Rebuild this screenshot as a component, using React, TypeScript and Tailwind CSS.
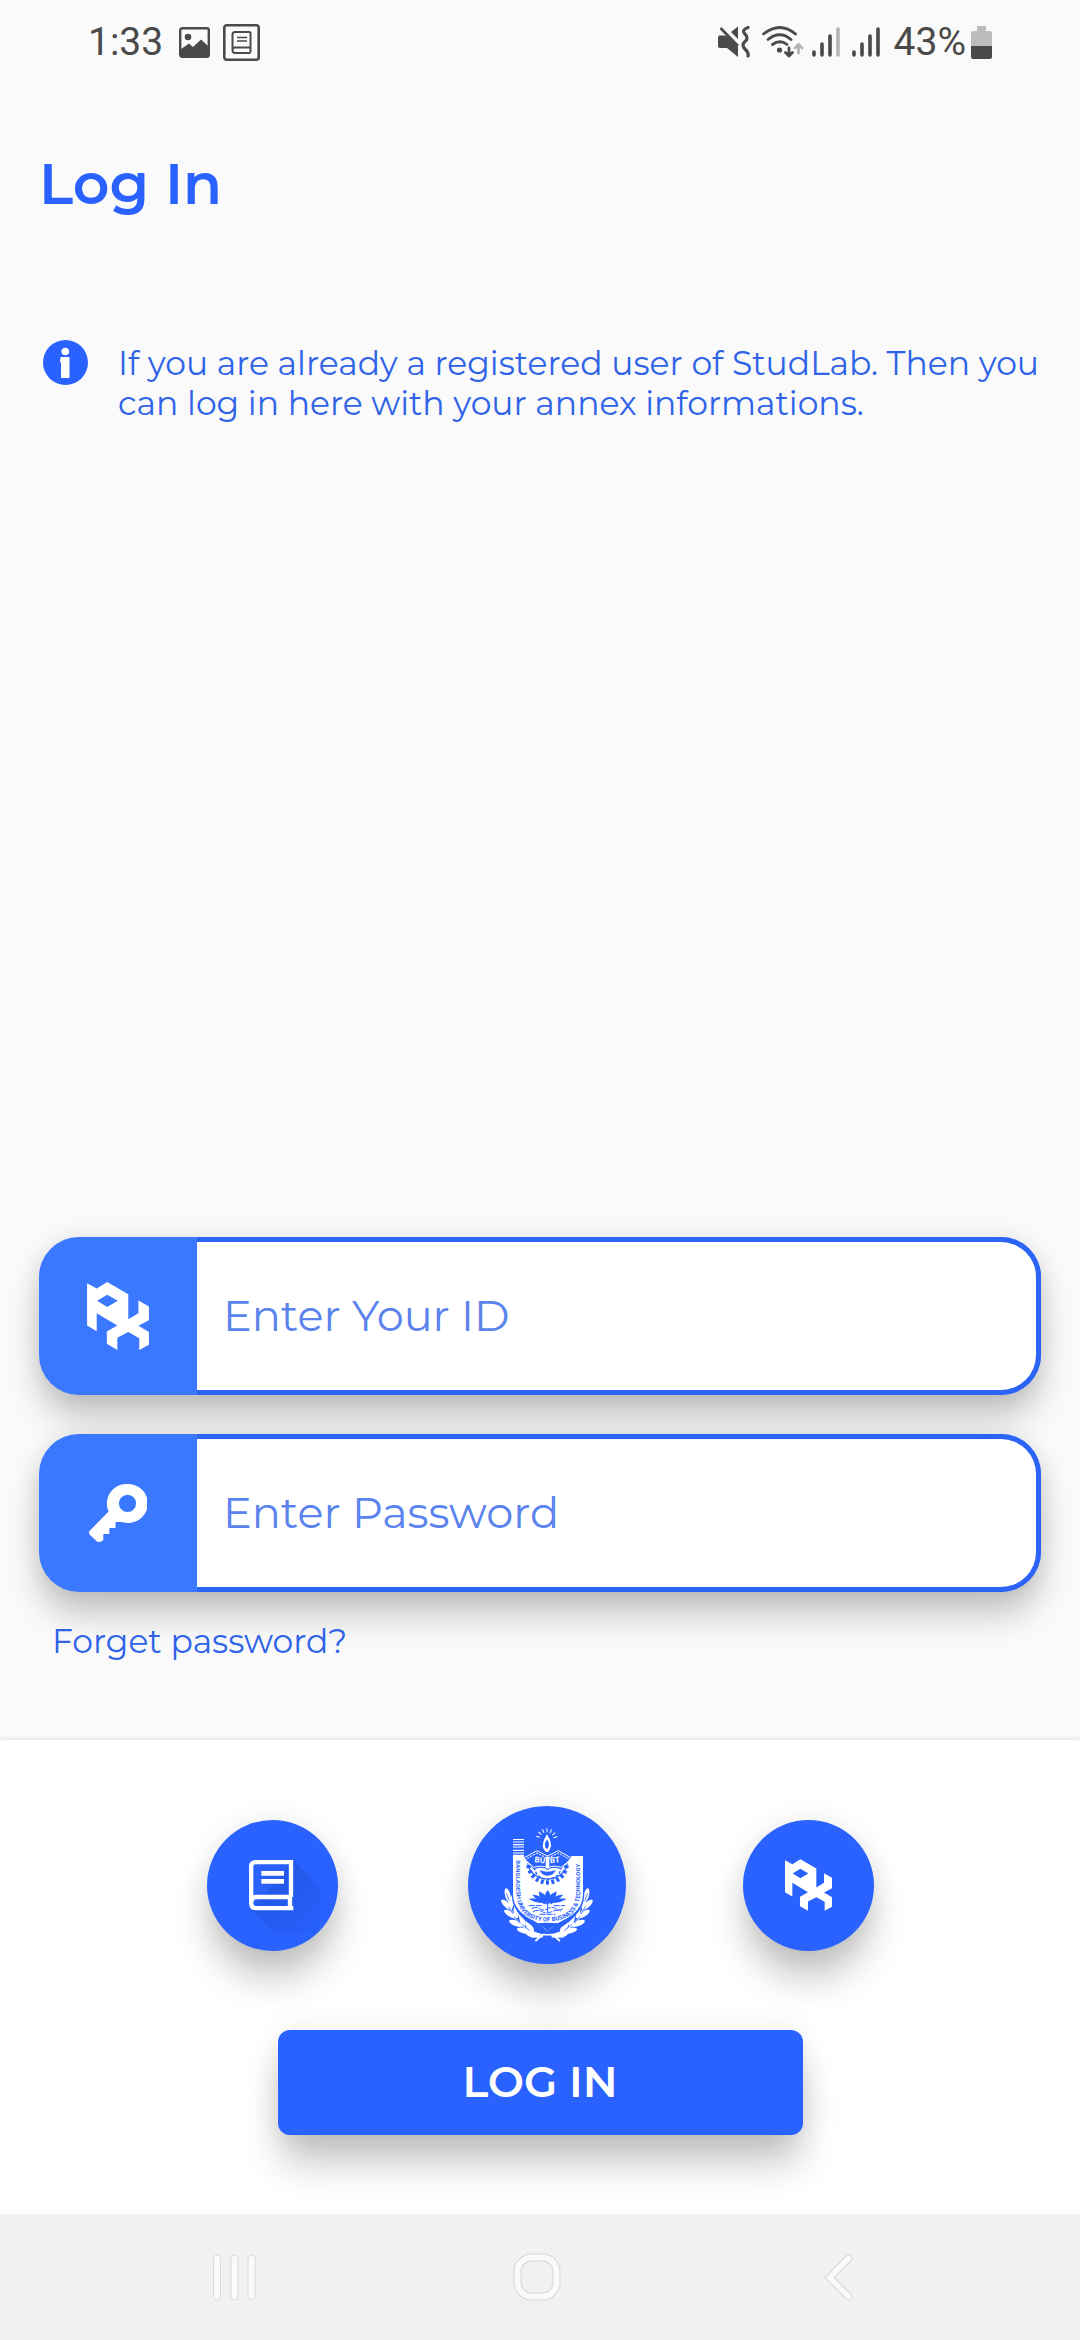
import type { ReactNode } from "react";

function PxLogo({ className }: { className: string }) {
  return (
    <svg className={className} viewBox="192 239 141 155" fill="#fff" fillRule="evenodd" aria-hidden="true">
      <path d="M192 242 214 254 238 239 286 267V324L309 310V281L333 295V326L309 339 333 353V382L311 394V367L286 353 261 366V394L237 380V352L261 338 214 310V351L192 338ZM215 282 238 296 262 282 238 268Z" />
    </svg>
  );
}

function KeyIcon() {
  return (
    <svg className="h-[58px] w-[58px]" viewBox="0 0 58 58" fill="#fff" fillRule="evenodd" aria-hidden="true">
      <path d="M38.500 0A19.500 19.500 0 1 1 35 38.500L33 38H26.500V44H20.300V50H14.300V56Q12 59 8 57.500L.5 50.500Q-.5 49 .5 47L19.600 27.500A19.500 19.500 0 0 1 38.500 0ZM38.500 10.700A8.600 8.600 0 1 0 38.500 27.900 8.600 8.600 0 1 0 38.500 10.700Z" />
    </svg>
  );
}

function InfoIcon() {
  return (
    <svg className="h-[45px] w-[45px] shrink-0" viewBox="0 0 45 45" aria-hidden="true">
      <circle cx="22.500" cy="22.500" r="22.500" fill="#2962ff" />
      <circle cx="22.300" cy="11.500" r="3.800" fill="#fff" />
      <path d="M17.500 17H26.500V38H18V22.500H17Z" fill="#fff" />
    </svg>
  );
}

function StatusBar() {
  const ink = "#4a4a4a";
  return (
    <header className="flex h-20 items-center justify-between px-[88px] pt-1 font-['Roboto',sans-serif] text-[39px] leading-[48px] text-[#4a4a4a]">
      <div className="flex items-center">
        <span className="mr-4">1:33</span>
        <svg className="mr-[13px] h-[31px] w-[31px]" viewBox="0 0 31 31" aria-hidden="true">
          <rect x="1.200" y="1.200" width="28.600" height="28.600" rx="2" fill="none" stroke={ink} strokeWidth="2.400" />
          <circle cx="9" cy="10" r="3.300" fill={ink} />
          <path d="M2 22 10 16.500 14 20 22 12.500 29 19V29H2Z" fill={ink} />
        </svg>
        <svg className="h-[37px] w-[37px]" viewBox="0 0 37 37" fill="none" stroke={ink} aria-hidden="true">
          <rect x="1.300" y="1.300" width="34.400" height="34.400" rx="2.500" strokeWidth="2.600" />
          <path d="M27.500 8H12Q9.500 8 9.500 10.500V26Q9.500 29 12 29H27.500M27.500 8V28.500M27.500 23.500H12Q9.500 23.500 9.500 26" strokeWidth="2" />
          <path d="M14 13.500H24M14 17H24" strokeWidth="1.600" />
        </svg>
      </div>
      <div className="flex items-center">
        <svg className="mr-[12px] h-8 w-8" viewBox="0 0 32 32" aria-hidden="true">
          <path d="M1 9.500H8L20 21V31L9 22H2Q0 22 0 20V11Z" fill={ink} />
          <path d="M13 6 20 .5V13Z" fill={ink} />
          <path d="M2.500 2 20 20" stroke={ink} strokeWidth="2.600" />
          <path d="M30 1.500Q23 4 27 8T27 15.500T27 23T30 30" fill="none" stroke={ink} strokeWidth="3.200" strokeLinecap="round" />
        </svg>
        <svg className="mr-[8px] h-8 w-[42px]" viewBox="0 0 42 32" fill="none" strokeLinecap="round" aria-hidden="true">
          <path d="M1.500 8Q18 -5 33.500 8M6 13.500Q18 4 29 13.500M10.500 18.500Q18 13 25 18.500" stroke={ink} strokeWidth="2.800" />
          <circle cx="17.500" cy="24" r="2.600" fill={ink} />
          <path d="M27 22V30M23.500 26.500 27 30 30.500 26.500" stroke={ink} strokeWidth="2.800" />
          <path d="M36.500 27V19M33 22 36.500 18.500 40 22" stroke="#b5b5b5" strokeWidth="2.800" />
        </svg>
        <svg className="mr-[12px] h-8 w-[28px]" viewBox="0 0 28 32" strokeWidth="3.600" strokeLinecap="round" aria-hidden="true">
          <path d="M2 26V29M10 18V29M18 10V29" stroke={ink} />
          <path d="M26 3V29" stroke="#b5b5b5" />
        </svg>
        <svg className="mr-[14px] h-8 w-[28px]" viewBox="0 0 28 32" strokeWidth="3.600" strokeLinecap="round" aria-hidden="true">
          <path d="M2 26V29M10 18V29M18 10V29M26 3V29" stroke={ink} />
        </svg>
        <span className="mr-[5px]">43%</span>
        <svg className="h-[33px] w-[21px]" viewBox="0 0 21 33" aria-hidden="true">
          <path d="M6 0H15V5H19Q21 5 21 7V20H0V7Q0 5 2 5H6Z" fill="#bdbdbd" />
          <path d="M0 20H21V31Q21 33 19 33H2Q0 33 0 31Z" fill={ink} />
        </svg>
      </div>
    </header>
  );
}

function Field({ id, type, placeholder, icon }: { id: string; type: string; placeholder: string; icon: ReactNode }) {
  return (
    <div className="flex h-[158px] rounded-[40px] bg-[#3a78ff] shadow-[0_24px_34px_-2px_rgba(0,0,0,0.22),0_0_24px_rgba(0,0,0,0.09)]">
      <label htmlFor={id} aria-label={placeholder} className="flex w-[158px] shrink-0 items-center justify-center">
        {icon}
      </label>
      <input
        id={id}
        type={type}
        placeholder={placeholder}
        className="min-w-0 flex-1 rounded-r-[40px] border-y-5 border-r-5 border-[#2c64f8] bg-white pr-6 pl-[26px] text-[43px] text-[#2962ff] outline-none placeholder:text-[#5b83ee] placeholder:opacity-100"
      />
    </div>
  );
}

function BookBadge() {
  return (
    <svg className="h-full w-full" viewBox="78 120 393 393" aria-hidden="true">
      <defs>
        <linearGradient id="book-shade" x1="0" y1="0" x2="1" y2="1">
          <stop offset="0.400" stopColor="#0b2a8c" stopOpacity="0.180" />
          <stop offset="1" stopColor="#0b2a8c" stopOpacity="0.020" />
        </linearGradient>
      </defs>
      <path d="M337 241 417 321V461H285L212 388Z" fill="url(#book-shade)" />
      <g fill="none" stroke="#fff" strokeWidth="13">
        <path d="M330 351V246.500H224Q210.500 246.500 210.500 260V370Q210.500 384.500 225 384.500H337M330 351H226Q211 351 211 366M327 351V384" />
        <path d="M241 280H309M241 304H309" strokeWidth="14" />
      </g>
    </svg>
  );
}

const rays = [-75, -50, -25, 0, 25, 50, 75];
const petals = [-72, -50, -26, 0, 26, 50, 72];
const teeth = [-80, -64, -48, -32, -16, 0, 16, 32, 48, 64, 80];
const leaves = [
  { x: 200, y: 345, a: -14 },
  { x: 197, y: 374, a: -48 },
  { x: 212, y: 366, a: 10 },
  { x: 208, y: 402, a: -58 },
  { x: 226, y: 394, a: -4 },
  { x: 224, y: 430, a: -68 },
  { x: 244, y: 420, a: -18 },
  { x: 248, y: 452, a: -76 },
  { x: 266, y: 441, a: -34 },
  { x: 276, y: 464, a: -80 },
];

function Laurel() {
  return (
    <g>
      <path d="M203 350Q206 440 306 466" fill="none" stroke="#fff" strokeWidth="5" />
      {leaves.map((l) => (
        <ellipse key={`${l.x}-${l.y}`} cx={l.x} cy={l.y} rx="8" ry="21" fill="#fff" transform={`rotate(${l.a} ${l.x} ${l.y})`} />
      ))}
      <path d="M196 340 205 362M203 380 216 402M219 409 236 430M243 433 266 452" stroke="#2962ff" strokeWidth="2.500" />
    </g>
  );
}

function Crest() {
  return (
    <svg className="h-full w-full" viewBox="81 78 474 474" role="img" aria-label="University crest">
      <path d="M216 178.500H249M216 186H249M216 194H249M216 201H249M216 211H249M216 219H249M216 226H249" stroke="#fff" strokeWidth="3.500" />
      <Laurel />
      <g transform="translate(636 0) scale(-1 1)">
        <Laurel />
      </g>
      <path d="M283 483 306 464H334L357 483M270 470H306M332 470H368" fill="none" stroke="#fff" strokeWidth="5" />
      <path d="M212 228H430V345Q428 415 320 463Q214 415 212 345Z" fill="#2962ff" />
      <path d="M216 228H426V345Q424 395 362 423Q336 436 320 455Q304 436 280 423Q218 395 216 345Z" fill="#fff" />
      <path d="M284 430Q310 440 320 455Q330 440 356 430Q334 428 320 428Q306 428 284 430Z" fill="#2962ff" />
      <path id="crest-ring" d="M226 241V335Q228 424 320 424Q416 422 418 335V235" fill="none" />
      <text fill="#2962ff" fontSize="18" fontWeight="700" fontFamily="Roboto, sans-serif">
        <textPath href="#crest-ring">BANGLADESH UNIVERSITY OF BUSINESS &amp; TECHNOLOGY</textPath>
      </text>
      {teeth.map((a) => (
        <rect key={a} x="315" y="301" width="9" height="13" fill="#2962ff" transform={`rotate(${a} 319.500 250)`} />
      ))}
      <path d="M260 250A60 54 0 0 0 379 250" fill="none" stroke="#2962ff" strokeWidth="3.500" />
      <path d="M280 262Q284 294 319 298Q357 294 360 262" fill="none" stroke="#2962ff" strokeWidth="4" strokeDasharray="9 5" />
      <path d="M296 270Q319 280 344 270Q338 287 319 287Q302 287 296 270Z" fill="#2962ff" />
      <path d="M249 228 288 210 319 224 352 210 391 228 389 234 360 268Q334 258 320 270Q304 258 278 268L250 234Z" fill="#2962ff" />
      <g fill="none" stroke="#fff" strokeWidth="3">
        <path d="M250 233 288 212 319 228 352 212 389 233" />
        <path d="M250 240 288 219 319 235 352 219 389 240" strokeDasharray="7 3" />
        <path d="M252 240 279 262Q304 254 320 264Q336 254 360 262L388 240" />
      </g>
      <path d="M314 230H325V262L320 267 314 262Z" fill="#fff" />
      <g fill="#fff" fontSize="24" fontWeight="700" fontFamily="Roboto, sans-serif">
        <text x="280" y="246" transform="rotate(8 280 246)">BU</text>
        <text x="328" y="250" transform="rotate(-8 328 250)">BT</text>
      </g>
      <path d="M318 163Q335 190 328 205L322 216H314L307 205Q301 190 318 163Z" fill="#fff" />
      <path d="M318 178Q327 192 322 202L318 208 313 202Q309 192 318 178Z" fill="#2962ff" />
      {rays.map((a) => (
        <path key={a} d="M318 145V157" stroke="#fff" strokeWidth="3" transform={`rotate(${a} 317 178)`} />
      ))}
      {petals.map((a) => (
        <path key={a} d="M320 368Q309 350 320 330Q331 350 320 368Z" fill="#2962ff" transform={`translate(320 368) scale(1.600 1) rotate(${a}) translate(-320 -368)`} />
      ))}
      <path d="M306 371H334M263 377H302M338 377H372M272 386Q284 378 296 386T320 386T344 386T366 386M276 395Q290 387 304 395T332 395T360 393M296 403H344" fill="none" stroke="#2962ff" strokeWidth="3" strokeDasharray="18 3" />
      <path d="M320 366V398" stroke="#2962ff" strokeWidth="3" />
    </svg>
  );
}

const raised = "shadow-[0_30px_38px_-4px_rgba(0,0,0,0.24),0_0_28px_rgba(0,0,0,0.08)]";

export default function App() {
  return (
    <div className="flex min-h-screen flex-col bg-[#fafafa] font-['Montserrat','Inter',sans-serif] text-[#2f63e8]">
      <StatusBar />
      <main className="flex flex-1 flex-col">
        <h1 className="mt-[68px] px-[39px] text-[57px] leading-[72px] font-semibold text-[#2962ff]">Log In</h1>
        <div className="mt-[120px] flex items-start pr-8 pl-[43px]">
          <InfoIcon />
          <p className="mt-[3px] ml-[30px] text-[33px] leading-[40px]">
            If you are already a registered user of StudLab. Then you can log in here with your annex informations.
          </p>
        </div>
        <form id="login" className="mt-auto flex flex-col gap-[39px] px-[39px]" onSubmit={(e) => e.preventDefault()}>
          <Field id="user-id" type="text" placeholder="Enter Your ID" icon={<PxLogo className="h-[68px] w-[62px]" />} />
          <Field id="password" type="password" placeholder="Enter Password" icon={<KeyIcon />} />
        </form>
        <a href="#forgot" className="relative mt-[29px] mb-[79px] ml-[52px] self-start text-[33px] leading-[40px]">
          Forget password?
        </a>
      </main>
      <section className="bg-white pt-[66px] pb-[79px] shadow-[0_-1px_5px_rgba(0,0,0,0.09)]">
        <div className="flex items-center justify-center">
          <button type="button" aria-label="Library" className={`mr-[130px] size-[131px] rounded-full bg-[#2962ff] ${raised}`}>
            <BookBadge />
          </button>
          <button type="button" aria-label="University" className={`mr-[117px] size-[158px] rounded-full bg-[#2962ff] ${raised}`}>
            <Crest />
          </button>
          <button type="button" aria-label="PX" className={`flex size-[131px] items-center justify-center rounded-full bg-[#2962ff] ${raised}`}>
            <PxLogo className="h-[52px] w-[47px]" />
          </button>
        </div>
        <div className="mt-[66px] flex justify-center">
          <button type="submit" form="login" className={`h-[105px] w-[525px] rounded-[12px] bg-[#2962ff] text-[43px] font-semibold text-white ${raised}`}>
            LOG IN
          </button>
        </div>
      </section>
      <nav className="relative flex h-[126px] items-center justify-between bg-[#f1f1f1] pr-[227px] pl-[212px]" aria-label="System">
        <button type="button" aria-label="Recent apps">
          <svg className="h-[47px] w-[45px]" viewBox="0 0 45 47" fill="#fafafa" stroke="#dadada">
            <rect x="1.500" y="1" width="7" height="45" rx="3.500" />
            <rect x="19" y="1" width="7" height="45" rx="3.500" />
            <rect x="36" y="1" width="7" height="45" rx="3.500" />
          </svg>
        </button>
        <button type="button" aria-label="Home" className="mr-2">
          <svg className="h-[48px] w-[48px]" viewBox="0 0 48 48" fill="none">
            <rect x="4.500" y="4.500" width="39" height="39" rx="14" stroke="#d6d6d6" strokeWidth="8" />
            <rect x="4.500" y="4.500" width="39" height="39" rx="14" stroke="#fafafa" strokeWidth="6" />
          </svg>
        </button>
        <button type="button" aria-label="Back">
          <svg className="h-[47px] w-[28px]" viewBox="0 0 28 47" fill="none" strokeLinecap="round">
            <path d="M23.500 4.500 4.500 23.500 23.500 42.500" stroke="#d6d6d6" strokeWidth="7.500" />
            <path d="M23.500 4.500 4.500 23.500 23.500 42.500" stroke="#fafafa" strokeWidth="5.500" />
          </svg>
        </button>
      </nav>
    </div>
  );
}
